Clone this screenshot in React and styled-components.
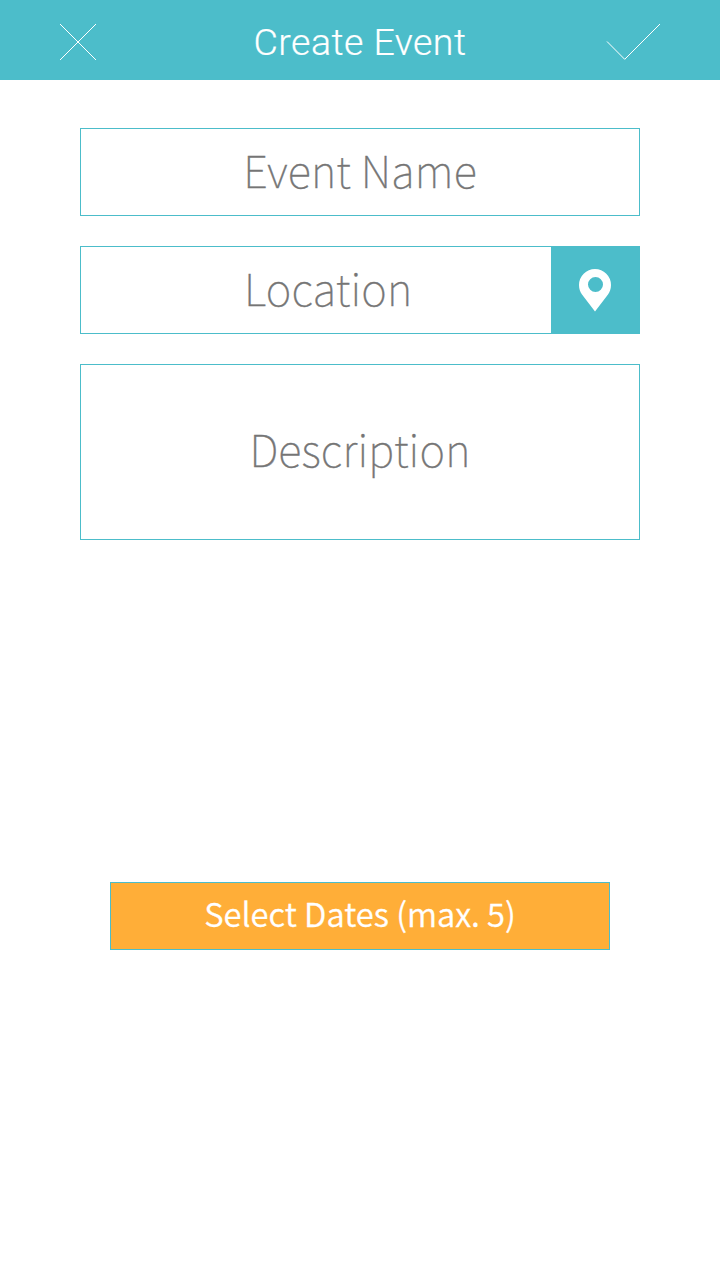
import React from 'react';
import styled, { createGlobalStyle } from 'styled-components';

const GlobalStyle = createGlobalStyle`
  * { box-sizing: border-box; }
  body { margin: 0; background: #fff; }
`;

const sans = '"Noto Sans CJK JP", "Noto Sans", sans-serif';
const teal = '#4cbdca';

const Screen = styled.main`
  min-height: 1280px;
  display: flex;
  flex-direction: column;
  background: #fff;
  font-family: ${sans};
`;

const Header = styled.header`
  height: 80px;
  padding: 0 60px;
  display: grid;
  grid-template-columns: 54px 1fr 54px;
  align-items: center;
  background: ${teal};
`;

const Title = styled.h1`
  margin: 0;
  padding-top: 4px;
  text-align: center;
  white-space: nowrap;
  color: #fff;
  font: 300 37.5px/48px Roboto, sans-serif;
  letter-spacing: 0.45px;
  -webkit-text-stroke: 0.2px #fff;
`;

const IconButton = styled.button`
  padding: 4px 0 0;
  border: 0;
  background: none;
  display: flex;
  justify-content: ${(p) => p.$align || 'flex-start'};
`;

const Form = styled.form`
  padding: 48px 80px 0;
  display: flex;
  flex-direction: column;
  gap: 30px;
`;

const Field = styled.div`
  height: ${(p) => p.$height || 88}px;
  border: 1px solid ${teal};
  display: flex;
  align-items: center;
  justify-content: ${(p) => (p.$start ? 'flex-start' : 'center')};
  padding-left: ${(p) => p.$start || 0}px;
`;

const Placeholder = styled.span`
  padding-bottom: ${(p) => p.$lift || 4}px;
  color: #757575;
  font-weight: 100;
  font-size: 43.5px;
  line-height: 60px;
  white-space: nowrap;
  letter-spacing: 0.2px;
  -webkit-text-stroke: 0.4px #757575;
`;

const LocateButton = styled.button`
  width: 88px;
  height: 86px;
  margin-left: auto;
  padding: 0;
  border: 0;
  background: ${teal};
  display: flex;
  align-items: center;
  justify-content: center;
`;

const SelectDates = styled.button`
  width: 500px;
  height: 68px;
  margin: 312px auto 0;
  padding: 0 0 6px;
  border: 1px solid ${teal};
  background: #ffae38;
  color: #fff;
  font: 350 32.7px/48px ${sans};
  -webkit-text-stroke: 0.3px #fff;
  white-space: nowrap;
`;

export default function App() {
  return (
    <Screen>
      <GlobalStyle />
      <Header>
        <IconButton aria-label="Close">
          <svg width="36" height="36" fill="none" stroke="#fff">
            <path d="M0 0L36 36M36 0L0 36" />
          </svg>
        </IconButton>
        <Title>Create Event</Title>
        <IconButton aria-label="Save" $align="flex-end">
          <svg width="54" height="36" fill="none" stroke="#fff">
            <path d="M1 17.5L18.7 35.3L54 0" />
          </svg>
        </IconButton>
      </Header>
      <Form>
        <Field>
          <Placeholder>Event Name</Placeholder>
        </Field>
        <Field $start={163}>
          <Placeholder>Location</Placeholder>
          <LocateButton type="button" aria-label="Use current location">
            <svg width="32" height="43" viewBox="0 0 32 43" fill="#fff">
              <path fillRule="evenodd" d="M16 0A16 16 0 0 0 0 16C0 20 1.2 22.8 3 25.5L16 42.5L29 25.5C30.8 22.8 32 20 32 16A16 16 0 0 0 16 0ZM16.5 8A7.5 7.5 0 1 1 16.5 23A7.5 7.5 0 1 1 16.5 8Z" />
            </svg>
          </LocateButton>
        </Field>
        <Field $height={176}>
          <Placeholder $lift={6}>Description</Placeholder>
        </Field>
        <SelectDates type="button">Select Dates (max. 5)</SelectDates>
      </Form>
    </Screen>
  );
}
